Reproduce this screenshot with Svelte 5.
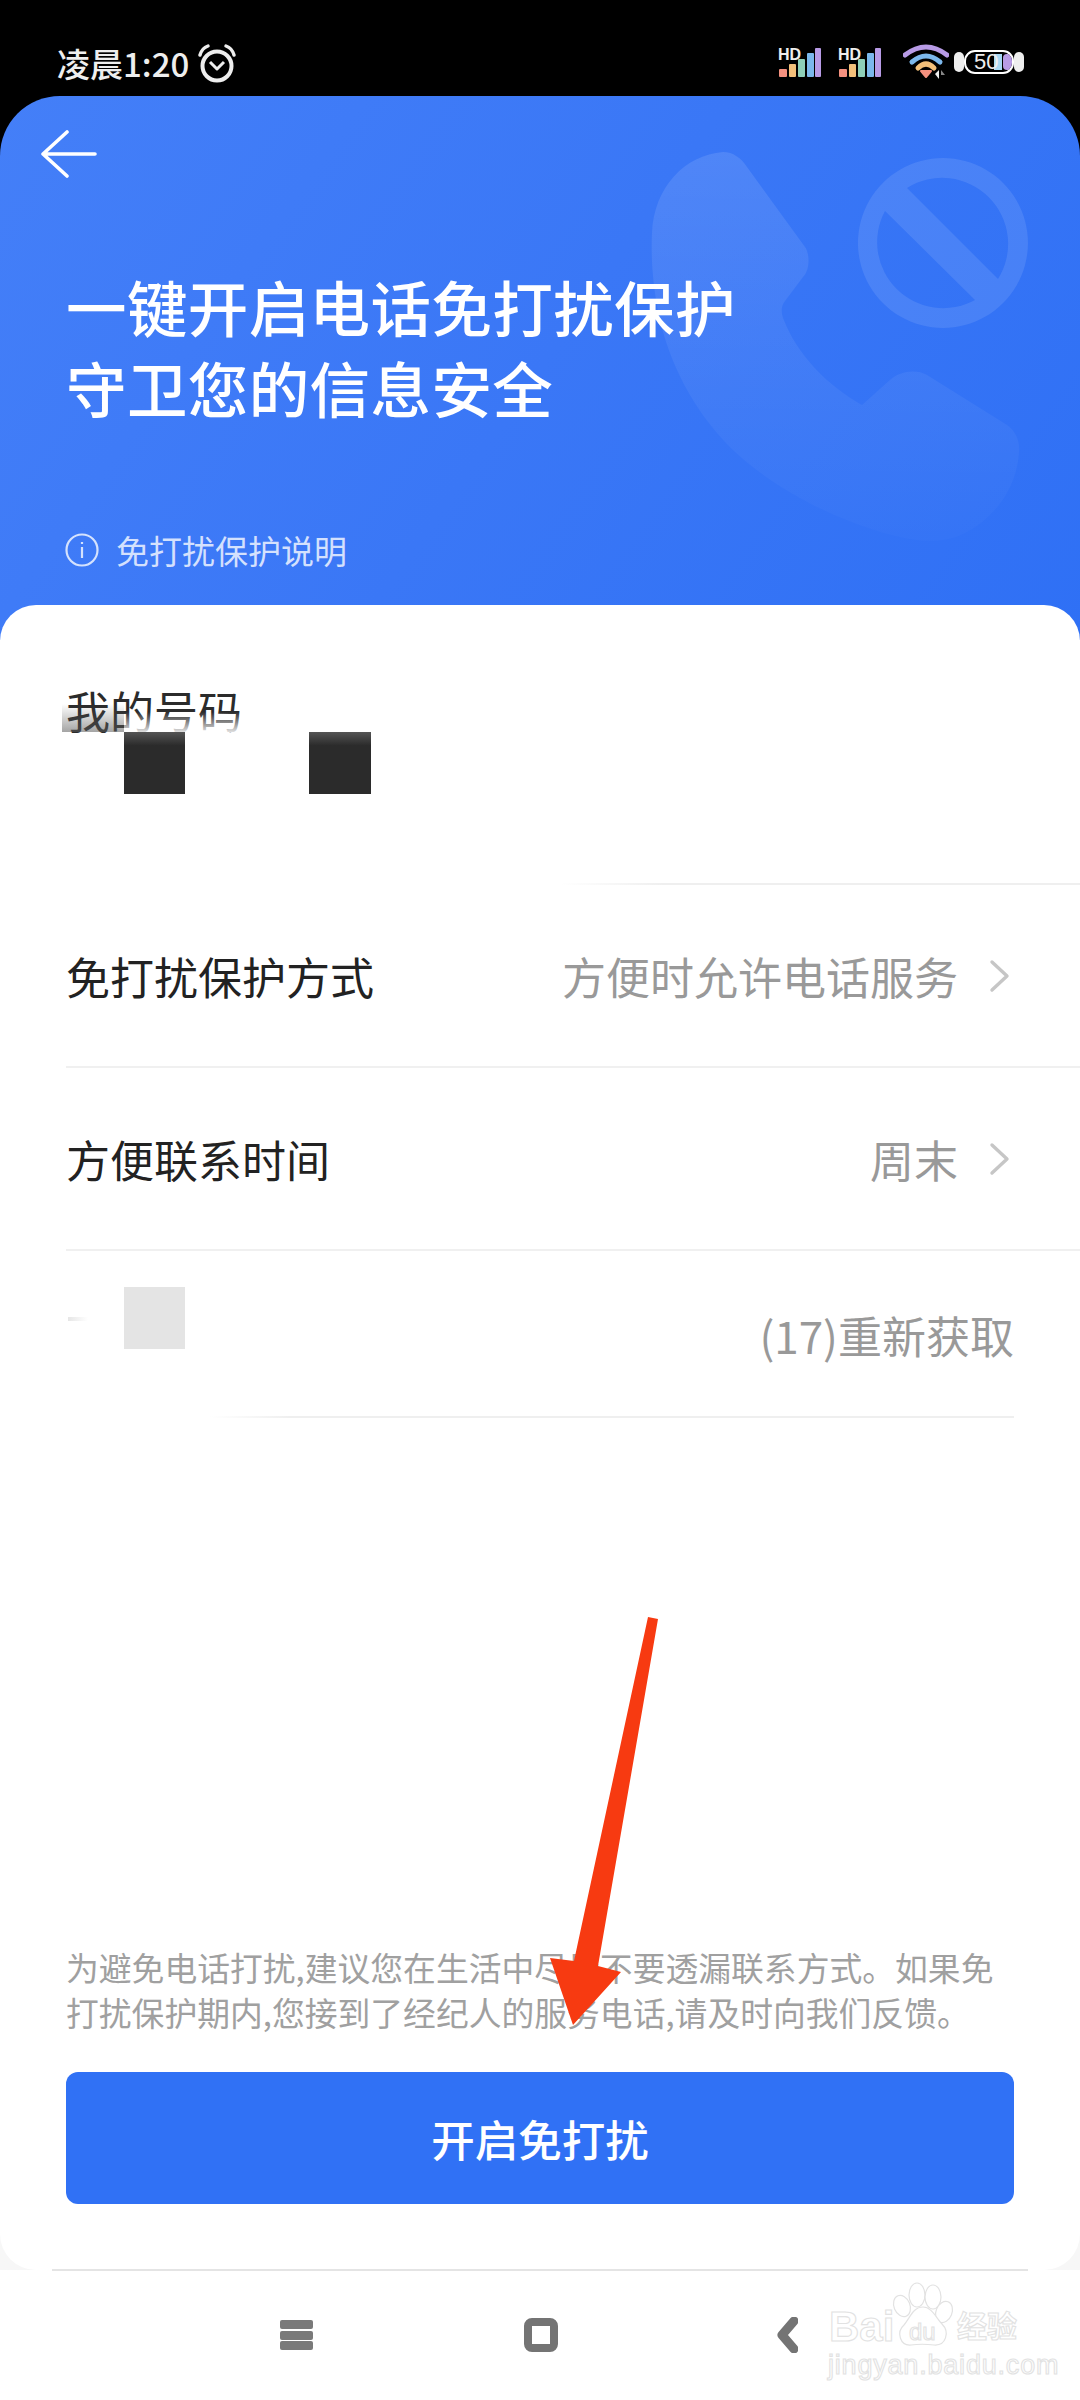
<script lang="ts">
  type Row = { label: string; value: string };

  const rows: Row[] = [
    { label: '免打扰保护方式', value: '方便时允许电话服务' },
    { label: '方便联系时间', value: '周末' }
  ];

  const bars = [
    { x: 1, y: 21, w: 8, color: '#f5917f' },
    { x: 11, y: 16, w: 7, color: '#f3c07a' },
    { x: 20, y: 11, w: 7, color: '#8fd0b8' },
    { x: 29, y: 5, w: 7, color: '#7cb8ec' },
    { x: 37, y: 0, w: 6, color: '#b89be6' }
  ];
</script>

{#snippet signal()}
  <span class="signal">
    <svg width="44" height="29" viewBox="0 0 44 29">
      {#each bars as b}
        <rect x={b.x} y={b.y} width={b.w} height={29 - b.y} rx="1" fill={b.color} />
      {/each}
    </svg>
    <span class="hd">HD</span>
  </span>
{/snippet}

{#snippet chevron()}
  <svg class="chev" width="22" height="34" viewBox="0 0 22 34">
    <path d="M3 3 L18 17 L3 31" fill="none" stroke="#c6c6c6" stroke-width="3.4" stroke-linecap="round" stroke-linejoin="round" />
  </svg>
{/snippet}

<div class="page">
  <div class="top">
    <div class="status">
      <span class="clock">凌晨1:20</span>
      <svg class="alarm" width="40" height="40" viewBox="0 0 40 40">
        <circle cx="20" cy="22" r="14.5" fill="none" stroke="#eee" stroke-width="4" />
        <path d="M13 19 L20 26 L27 19" fill="none" stroke="#eee" stroke-width="3" stroke-linejoin="round" transform="translate(0 -1)" />
        <path d="M3 11 Q5 4 11 2 M37 11 Q35 4 29 2" fill="none" stroke="#eee" stroke-width="3.4" stroke-linecap="round" />
      </svg>
      <div class="status-right">
        {@render signal()}
        {@render signal()}
        <svg class="wifi" width="46" height="36" viewBox="0 0 46 36">
          <path d="M2 11 Q23 -5 44 11" fill="none" stroke="#b89be6" stroke-width="5" stroke-linecap="round" />
          <path d="M9 18 Q23 6 37 18" fill="none" stroke="#7cb8ec" stroke-width="5" stroke-linecap="round" />
          <path d="M15 24 Q23 16 31 24" fill="none" stroke="#f3c07a" stroke-width="5" stroke-linecap="round" />
          <path d="M18 27 H28 L23 33 Z" fill="#f5917f" stroke="#f5917f" stroke-width="2" stroke-linejoin="round" />
          <path d="M32 30 L36 26 V35 Z" fill="#eee" />
          <path d="M38 26 L42 31 H38 Z" fill="#888" />
        </svg>
        <span class="battery">
          <i class="candy left"></i>
          <span class="cell">
            <i class="fill blue"></i>
            <i class="fill purple"></i>
            <span class="level">50</span>
          </span>
          <i class="candy right"></i>
        </span>
      </div>
    </div>

    <header class="hero">
      <svg class="hero-art" width="1080" height="544" viewBox="0 96 1080 544" aria-hidden="true">
        <defs>
          <linearGradient id="phoneFade" x1="0" y1="0" x2="0" y2="1">
            <stop offset="0" stop-color="#fff" stop-opacity="0.11" />
            <stop offset="1" stop-color="#fff" stop-opacity="0.015" />
          </linearGradient>
        </defs>
        <path
          fill="url(#phoneFade)"
          d="M723 152 C733 152 741 158 747 167 L805 247 C810 254 810 270 803 277 L785 301 C781 306 781 312 783 318 C797 355 828 386 862 405 L890 380 C900 371 916 369 927 375 L1007 425 C1016 431 1020 442 1019 452 C1017 485 998 515 967 532 C950 541 932 542 917 540 C860 532 780 495 733 450 C700 418 672 372 660 320 C652 285 651 255 652 233 C654 187 685 155 723 152 Z"
        />
        <g opacity="0.1" fill="#fff">
          <path
            fill-rule="evenodd"
            d="M943 158 A85 85 0 1 1 942.9 158 Z M907 188 L998 279 A66 66 0 0 0 907 188 Z M885 211 A66 66 0 0 0 975 300 Z"
          />
        </g>
      </svg>

      <svg class="back" width="56" height="48" viewBox="0 0 56 48">
        <path d="M26 2 L2 24 L26 46 M2 24 H54" fill="none" stroke="#fff" stroke-width="3.6" stroke-linecap="round" stroke-linejoin="round" />
      </svg>

      <h1>一键开启电话免打扰保护<br />守卫您的信息安全</h1>

      <div class="info">
        <svg width="34" height="34" viewBox="0 0 34 34">
          <circle cx="17" cy="17" r="15.5" fill="none" stroke="currentColor" stroke-width="2.2" />
          <path d="M17 14 V25 M17 9 V11" fill="none" stroke="currentColor" stroke-width="2.2" />
        </svg>
        <span>免打扰保护说明</span>
      </div>
    </header>
  </div>

  <main class="sheet">
    <section class="mine">
      <div class="mine-label">我的号码</div>
      <div class="shade"></div>
      <div class="fade"></div>
      <i class="block b1"></i>
      <i class="block b2"></i>
    </section>

    {#each rows as row (row.label)}
      <div class="row">
        <span class="label">{row.label}</span>
        <span class="value">{row.value}</span>
        {@render chevron()}
      </div>
    {/each}

    <div class="row code">
      <i class="scribble"></i>
      <i class="block-light"></i>
      <span class="value">(17)重新获取</span>
    </div>

    <div class="bottom">
      <p class="note">为避免电话打扰,建议您在生活中尽量不要透漏联系方式。如果免<br />打扰保护期内,您接到了经纪人的服务电话,请及时向我们反馈。</p>
      <button class="cta">开启免打扰</button>
    </div>
  </main>

  <nav class="nav">
    <span class="menu"><i></i><i></i><i></i></span>
    <span class="home"></span>
    <svg class="nav-back" width="22" height="36" viewBox="0 0 22 36">
      <path d="M18 4 L6 18 L18 32" fill="none" stroke="#747474" stroke-width="9" stroke-linecap="round" stroke-linejoin="round" />
    </svg>

    <div class="mark">
      <svg class="paw" width="92" height="92" viewBox="0 0 92 92">
        <g fill="#fff" stroke="#e2e2e2" stroke-width="1.2">
          <ellipse cx="22" cy="26" rx="8" ry="11" transform="rotate(-22 22 26)" />
          <ellipse cx="37" cy="15" rx="8" ry="12" />
          <ellipse cx="53" cy="17" rx="8" ry="12" />
          <ellipse cx="64" cy="32" rx="8" ry="11" transform="rotate(22 64 32)" />
          <path d="M43 27 C52 27 56 38 62 44 C70 52 66 66 54 65 C46 64 38 64 31 65 C20 66 16 52 24 45 C30 38 33 27 43 27 Z" />
        </g>
      </svg>
      <span class="mk bai">Bai</span>
      <span class="mk du">du</span>
      <span class="mk jy">经验</span>
      <span class="mk url">jingyan.baidu.com</span>
    </div>
  </nav>

  <svg class="arrow" width="120" height="420" viewBox="540 1610 120 420" aria-hidden="true">
    <path d="M648 1617 L658 1619 L598 1966 L621 1972 L573 2025 L550 1958 L574 1961 Z" fill="#f73a11" />
  </svg>
</div>

<style>
  :global(body) {
    background: #f7f7f7;
  }

  .page {
    position: relative;
    width: 1080px;
    height: 2400px;
    display: flex;
    flex-direction: column;
    overflow: hidden;
    background: #f7f7f7;
    font-family: "Noto Sans CJK SC", "Noto Sans", sans-serif;
  }

  .top {
    background: #000;
  }

  .status {
    height: 96px;
    display: flex;
    align-items: center;
    padding: 28px 56px 0 57px;
    box-sizing: border-box;
    color: #eee;
  }

  .clock {
    font-size: 33px;
    font-weight: 500;
    line-height: 1;
    margin-top: 3px;
  }

  .alarm {
    margin-left: 8px;
    margin-top: 3px;
  }

  .status-right {
    margin-left: auto;
    display: flex;
    align-items: center;
  }

  .signal {
    position: relative;
    display: block;
    width: 44px;
    height: 29px;
    margin-right: 16px;
  }

  .signal:first-child {
    margin-left: 2px;
  }

  .hd {
    position: absolute;
    left: 0;
    top: -1px;
    font: 700 16px/1 "Liberation Sans", sans-serif;
    color: #eee;
  }

  .wifi {
    margin: 0 5px;
  }

  .battery {
    display: flex;
    align-items: center;
  }

  .cell {
    position: relative;
    width: 50px;
    height: 24px;
    box-sizing: border-box;
    border: 2px solid #fff;
    border-radius: 11px;
    overflow: hidden;
  }

  .candy {
    width: 10px;
    height: 20px;
    background: #eee;
    border-radius: 5px;
  }

  .fill {
    position: absolute;
    top: 2px;
    bottom: 2px;
  }

  .blue {
    left: 28px;
    width: 8px;
    background: #a8d8f4;
  }

  .purple {
    left: 37px;
    width: 9px;
    background: #b89be6;
    border-radius: 4px;
  }

  .level {
    position: absolute;
    left: 8px;
    top: -1px;
    font: 400 22px/22px "Liberation Sans", sans-serif;
    color: #eee;
  }

  .hero {
    position: relative;
    height: 544px;
    box-sizing: border-box;
    border-radius: 60px 60px 0 0;
    background: linear-gradient(125deg, #447ff8 0%, #3a77f6 50%, #2f70f5 100%);
    color: #fff;
    overflow: hidden;
  }

  .hero-art {
    position: absolute;
    inset: 0;
  }

  .back {
    position: absolute;
    left: 41px;
    top: 34px;
  }

  h1 {
    position: relative;
    margin: 0;
    padding: 169px 0 0 66px;
    font-size: 60.5px;
    font-weight: 500;
    line-height: 81px;
    letter-spacing: 0.4px;
  }

  .info {
    position: relative;
    display: flex;
    align-items: center;
    gap: 17px;
    margin: 103px 0 0 65px;
    font-size: 33px;
    line-height: 40px;
    color: rgba(255, 255, 255, 0.78);
  }

  .sheet {
    position: relative;
    flex: 1;
    margin-top: -35px;
    display: flex;
    flex-direction: column;
    background: #fff;
    border-radius: 36px;
  }

  .mine {
    position: relative;
    height: 280px;
    box-sizing: border-box;
    padding: 75px 0 0 66px;
  }

  .mine::after {
    content: '';
    position: absolute;
    left: 560px;
    right: 0;
    bottom: 0;
    height: 2px;
    background: linear-gradient(90deg, #fff, #efefef 20%);
  }

  .mine-label {
    font-size: 44px;
    line-height: 60px;
    color: #2b2b2b;
  }

  .shade {
    position: absolute;
    left: 62px;
    top: 87px;
    width: 62px;
    height: 40px;
    background: linear-gradient(180deg, rgba(90, 90, 90, 0) 30%, rgba(90, 90, 90, 0.55) 100%);
  }

  .fade {
    position: absolute;
    left: 124px;
    top: 107px;
    width: 124px;
    height: 20px;
    background: linear-gradient(180deg, rgba(255, 255, 255, 0), rgba(255, 255, 255, 0.85));
  }

  .block {
    position: absolute;
    top: 127px;
    height: 62px;
    background: linear-gradient(180deg, #555 0%, #2b2b2b 22%);
  }

  .b1 {
    left: 124px;
    width: 61px;
  }

  .b2 {
    left: 309px;
    width: 62px;
  }

  .row {
    position: relative;
    height: 183px;
    margin-left: 66px;
    padding-right: 73px;
    box-sizing: border-box;
    display: flex;
    align-items: center;
    border-bottom: 2px solid #f0f0f0;
  }

  .label {
    font-size: 44px;
    color: #222;
  }

  .value {
    margin-left: auto;
    font-size: 44px;
    color: #999;
  }

  .chev {
    margin-left: 31px;
    margin-right: -4px;
  }

  .code {
    height: 167px;
    margin-right: 66px;
    padding-right: 0;
    border-bottom: 0;
  }

  .code::after {
    content: '';
    position: absolute;
    left: 144px;
    right: 0;
    bottom: 0;
    height: 2px;
    background: linear-gradient(90deg, #fff, #efefef 10%);
  }

  .scribble {
    position: absolute;
    left: 2px;
    top: 66px;
    width: 20px;
    height: 4px;
    background: linear-gradient(90deg, #e6e6e6, #fff);
  }

  .block-light {
    position: absolute;
    left: 58px;
    top: 36px;
    width: 61px;
    height: 62px;
    background: #e4e4e4;
  }

  .bottom {
    margin-top: auto;
    padding: 0 66px 66px;
  }

  .note {
    margin: 0 0 38px;
    font-size: 32.8px;
    line-height: 45px;
    color: #a0a0a0;
    white-space: nowrap;
  }

  .cta {
    display: block;
    width: 100%;
    height: 132px;
    border: none;
    border-radius: 12px;
    background: #3071f5;
    color: #fff;
    font-family: inherit;
    font-size: 43.5px;
    font-weight: 500;
  }

  .nav {
    position: relative;
    height: 130px;
    flex: none;
    background: #fff;
  }

  .nav::before {
    content: '';
    position: absolute;
    left: 52px;
    right: 52px;
    top: -1px;
    height: 2px;
    background: #e4e4e4;
  }

  .menu {
    position: absolute;
    left: 280px;
    top: 50px;
    width: 33px;
    display: flex;
    flex-direction: column;
    gap: 1.5px;
  }

  .menu i {
    height: 9px;
    border-radius: 2px;
    background: #7a7a7a;
  }

  .home {
    position: absolute;
    left: 524px;
    top: 48px;
    width: 34px;
    height: 34px;
    box-sizing: border-box;
    border: 8px solid #747474;
    border-radius: 8px;
  }

  .nav-back {
    position: absolute;
    left: 776px;
    top: 47px;
  }

  .mark {
    position: absolute;
    left: 828px;
    top: 12px;
    width: 200px;
    height: 100px;
  }

  .paw {
    position: absolute;
    left: 52px;
    top: -2px;
  }

  .mk {
    position: absolute;
    line-height: 1;
    white-space: nowrap;
    color: #fff;
    -webkit-text-stroke: 1.1px #e2e2e2;
  }

  .bai {
    left: 1px;
    top: 24px;
    font: 700 42px/1 "Liberation Sans", sans-serif;
  }

  .du {
    left: 81px;
    top: 38px;
    font: 400 24px/1 "Liberation Sans", sans-serif;
  }

  .jy {
    left: 129px;
    top: 27px;
    font-size: 30px;
    font-weight: 700;
  }

  .url {
    left: 0;
    top: 70px;
    font: 400 27px/1 "Liberation Sans", sans-serif;
    letter-spacing: 0.8px;
  }

  .arrow {
    position: absolute;
    left: 540px;
    top: 1610px;
  }
</style>
